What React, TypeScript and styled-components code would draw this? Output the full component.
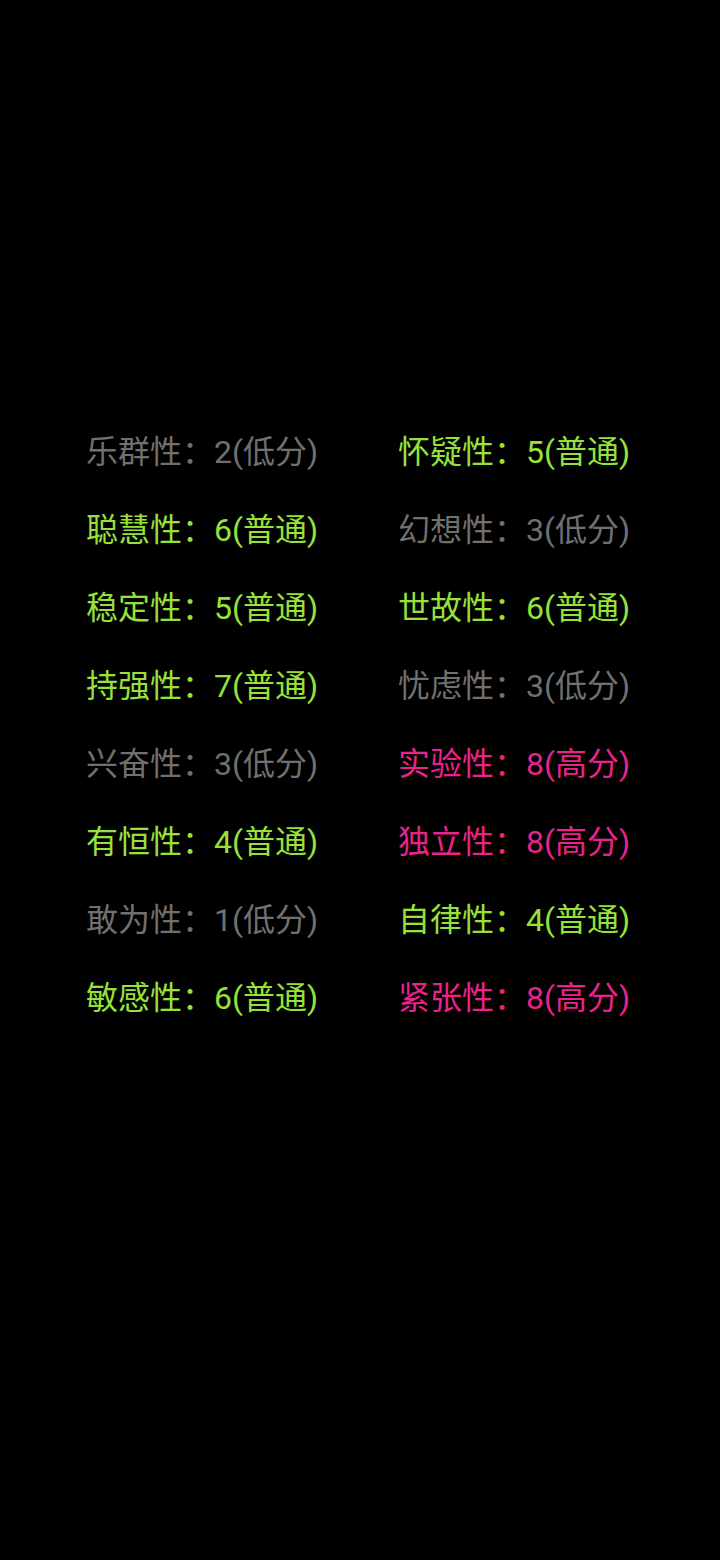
import React from "react";
import styled, { createGlobalStyle } from "styled-components";

const Global = createGlobalStyle`
  html, body { margin: 0; padding: 0; background: #000; }
  body { font-family: Roboto, "Noto Sans CJK SC", sans-serif; }
`;

const Page = styled.div`
  width: 720px;
  height: 1560px;
  background: #000;
  box-sizing: border-box;
  padding: 413px 0 0 86px;
`;

const Grid = styled.div`
  display: grid;
  grid-template-columns: 312px 312px;
  grid-auto-rows: 78px;
`;

type Level = "low" | "normal" | "high";

const colors: Record<Level, string> = {
  low: "#707070",
  normal: "#96e23a",
  high: "#e9238b",
};

const Item = styled.div<{ $level: Level }>`
  display: flex;
  align-items: center;
  font-size: 32px;
  line-height: 1;
  white-space: nowrap;
  color: ${(p) => colors[p.$level]};
`;

const labels: Record<Level, string> = { low: "低分", normal: "普通", high: "高分" };

const data: [string, number, Level][] = [
  ["乐群性", 2, "low"],
  ["怀疑性", 5, "normal"],
  ["聪慧性", 6, "normal"],
  ["幻想性", 3, "low"],
  ["稳定性", 5, "normal"],
  ["世故性", 6, "normal"],
  ["持强性", 7, "normal"],
  ["忧虑性", 3, "low"],
  ["兴奋性", 3, "low"],
  ["实验性", 8, "high"],
  ["有恒性", 4, "normal"],
  ["独立性", 8, "high"],
  ["敢为性", 1, "low"],
  ["自律性", 4, "normal"],
  ["敏感性", 6, "normal"],
  ["紧张性", 8, "high"],
];

export default function App() {
  return (
    <>
      <Global />
      <Page>
        <Grid>
          {data.map(([name, score, level]) => (
            <Item key={name} $level={level}>
              {name}：{score}({labels[level]})
            </Item>
          ))}
        </Grid>
      </Page>
    </>
  );
}
